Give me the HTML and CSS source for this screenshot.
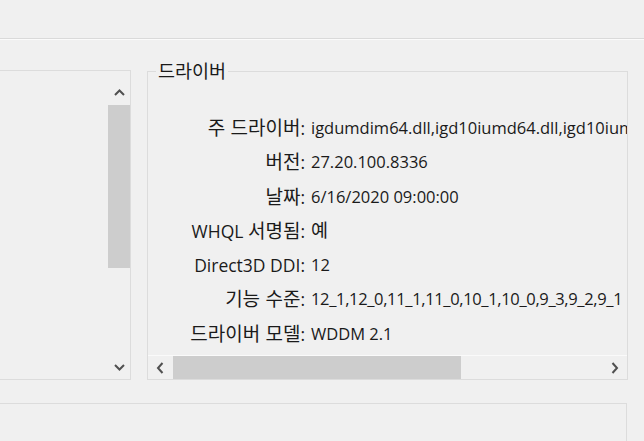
FILE: index.html
```html
<!DOCTYPE html>
<html lang="ko">
<head>
<meta charset="utf-8">
<link rel="stylesheet" href="styles.css">
</head>
<body>
<div class="top"></div>
<div class="main">
  <div class="left-panel">
    <div class="vscroll">
      <div class="vbtn vbtn-up">
        <svg width="11" height="7" viewBox="0 0 11 7"><path d="M1 6 L5.5 1.5 L10 6" fill="none" stroke="#505050" stroke-width="2"/></svg>
      </div>
      <div class="vtrack"><div class="vthumb"></div></div>
      <div class="vbtn">
        <svg width="11" height="7" viewBox="0 0 11 7"><path d="M1 1 L5.5 5.5 L10 1" fill="none" stroke="#505050" stroke-width="2"/></svg>
      </div>
    </div>
  </div>
  <fieldset class="group">
    <legend><span class="ko">드라이버</span></legend>
    <div class="viewport">
      <div class="rows">
        <div class="lbl"><span class="ko">주 드라이버</span>:</div><div class="val">igdumdim64.dll,igd10iumd64.dll,igd10iumd64.dll,igd12umd64.dll</div>
        <div class="lbl"><span class="ko">버전</span>:</div><div class="val">27.20.100.8336</div>
        <div class="lbl"><span class="ko">날짜</span>:</div><div class="val">6/16/2020 09:00:00</div>
        <div class="lbl">WHQL <span class="ko">서명됨</span>:</div><div class="val"><span class="ko">예</span></div>
        <div class="lbl">Direct3D DDI:</div><div class="val">12</div>
        <div class="lbl"><span class="ko">기능 수준</span>:</div><div class="val tight">12_1,12_0,11_1,11_0,10_1,10_0,9_3,9_2,9_1</div>
        <div class="lbl"><span class="ko">드라이버 모델</span>:</div><div class="val">WDDM 2.1</div>
      </div>
    </div>
    <div class="hscroll">
      <div class="hbtn">
        <svg width="8" height="12" viewBox="0 0 8 12"><path d="M6.5 1 L2 6 L6.5 11" fill="none" stroke="#505050" stroke-width="2"/></svg>
      </div>
      <div class="htrack"><div class="hthumb"></div></div>
      <div class="hbtn">
        <svg width="8" height="12" viewBox="0 0 8 12"><path d="M1.5 1 L6 6 L1.5 11" fill="none" stroke="#505050" stroke-width="2"/></svg>
      </div>
    </div>
  </fieldset>
</div>
<div class="bottom-box"></div>
</body>
</html>
```
FILE: styles.css
```css
html, body {
  margin: 0;
  padding: 0;
}
body {
  width: 644px;
  height: 441px;
  overflow: hidden;
  background: #f0f0f0;
  color: #1a1a1a;
  font-family: "Open Sans", "Noto Sans CJK KR", sans-serif;
  font-size: 16.5px;
}
.ko {
  font-family: "Noto Sans CJK KR", sans-serif;
  font-size: 18.5px;
  line-height: 20px;
}
.top {
  height: 38px;
  border-bottom: 1px solid #dadada;
  box-shadow: 0 1px 0 #fbfbfb;
}
.main {
  display: flex;
  align-items: flex-start;
  margin-top: 21px;
}
.left-panel {
  margin-left: -10px;
  margin-top: 10px;
  width: 141px;
  height: 310px;
  box-sizing: border-box;
  border: 1px solid #dcdcdc;
  display: flex;
  justify-content: flex-end;
}
.vscroll {
  width: 22px;
  display: flex;
  flex-direction: column;
}
.vbtn {
  height: 24px;
  display: flex;
  align-items: center;
  justify-content: center;
}
.vbtn-up {
  height: 34px;
  box-sizing: border-box;
  padding-top: 9px;
}
.vtrack {
  flex: 1;
}
.vthumb {
  height: 163px;
  background: #cdcdcd;
}
.group {
  margin: 0 0 0 16px;
  padding: 0;
  min-width: 0;
  width: 481px;
  box-sizing: border-box;
  border: 1px solid #dcdcdc;
  height: 320px;
  display: flex;
  flex-direction: column;
}
.group legend {
  margin-left: 8px;
  padding: 0 2px;
  line-height: 20px;
}
.viewport {
  flex: 1;
  overflow: hidden;
}
.rows {
  display: grid;
  grid-template-columns: 157px max-content;
  grid-auto-rows: 34.3px;
  column-gap: 6px;
  padding-top: 29px;
  line-height: 34.3px;
}
.lbl {
  text-align: right;
  white-space: nowrap;
  font-size: 17.5px;
}
.lbl .ko {
  font-size: 19px;
}
.val {
  white-space: nowrap;
}
.tight {
  letter-spacing: -0.35px;
}
.hscroll {
  height: 23px;
  border-top: 1px solid #fafafa;
  display: flex;
}
.hbtn {
  width: 24px;
  display: flex;
  align-items: center;
  justify-content: center;
}
.htrack {
  flex: 1;
  display: flex;
}
.hthumb {
  margin-left: 1px;
  width: 288px;
  background: #cdcdcd;
}
.bottom-box {
  margin-top: 23px;
  margin-left: -10px;
  width: 637px;
  height: 60px;
  box-sizing: border-box;
  border: 1px solid #dcdcdc;
}
```
